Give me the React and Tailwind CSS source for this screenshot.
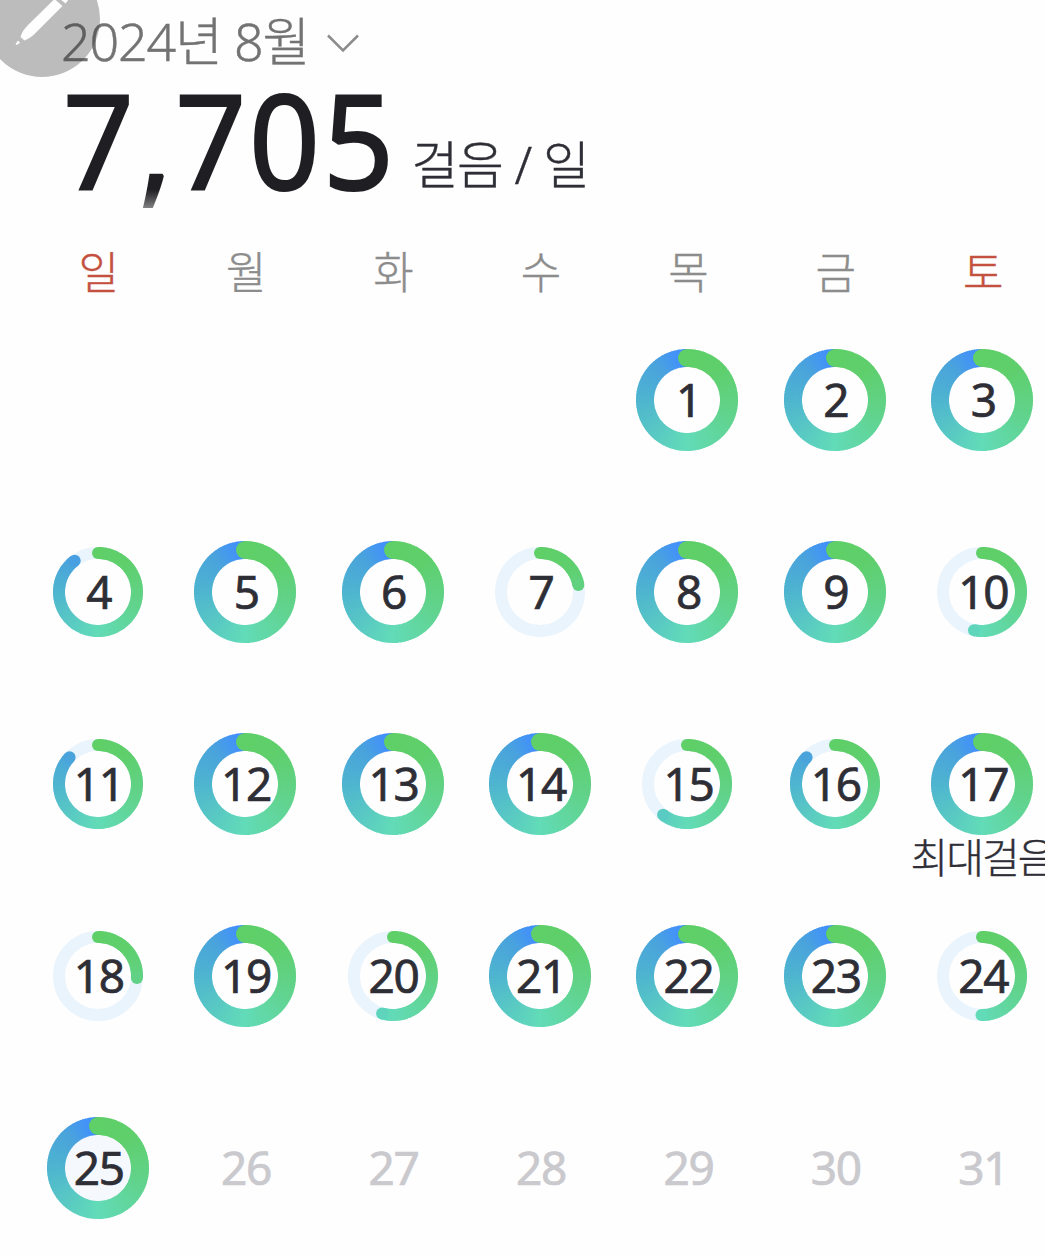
const WEEKDAYS = ["일", "월", "화", "수", "목", "금", "토"];

const LEADING_BLANKS = 4;
const TODAY = 25;
const BEST_DAY = 17;

// days that missed the goal, as a share of it
const PARTIAL = {
  4: 0.898,
  7: 0.221,
  10: 0.533,
  11: 0.87,
  15: 0.605,
  16: 0.87,
  18: 0.258,
  20: 0.545,
  24: 0.502,
};

const STOPS = [
  [0, [95, 207, 104]],
  [0.12, [95, 207, 108]],
  [0.3, [97, 211, 140]],
  [0.5, [98, 219, 184]],
  [0.75, [78, 180, 208]],
  [0.88, [74, 163, 220]],
  [0.97, [66, 144, 252]],
  [1, [66, 144, 252]],
];

function colourAt(t) {
  const i = Math.max(1, STOPS.findIndex(([pos]) => pos >= t));
  const [a, from] = STOPS[i - 1];
  const [b, to] = STOPS[i];
  const k = (t - a) / (b - a);
  return `rgb(${from.map((c, n) => Math.round(c + (to[n] - c) * k)).join(",")})`;
}

function pointAt(t, r) {
  const angle = t * Math.PI * 2;
  return [52 + r * Math.sin(angle), 52 - r * Math.cos(angle)];
}

function Ring({ value, isToday }) {
  const full = value >= 1;
  const r = full ? 42 : 39;
  const width = full ? 18 : 12;
  const count = Math.ceil(value * 120);
  const [endX, endY] = pointAt(value, r);

  return (
    <svg viewBox="0 0 104 104" className="size-[104px] col-start-1 row-start-1">
      {isToday && <circle cx="52" cy="52" r="36" fill="#f5f8fd" />}
      {!full && <circle cx="52" cy="52" r={r} fill="none" stroke="#e9f4fd" strokeWidth={width} />}
      {Array.from({ length: count }, (_, i) => {
        const start = (i / count) * value;
        // small overlap hides the seams between segments
        const end = Math.min(value, ((i + 1) / count) * value + 0.003);
        const [x1, y1] = pointAt(start, r);
        const [x2, y2] = pointAt(end, r);
        return (
          <path
            key={i}
            d={`M${x1} ${y1}A${r} ${r} 0 0 1 ${x2} ${y2}`}
            fill="none"
            stroke={colourAt(start)}
            strokeWidth={width}
          />
        );
      })}
      {!full && <circle cx={endX} cy={endY} r={width / 2} fill={colourAt(value)} />}
      <circle cx="52" cy={52 - r} r={width / 2} fill={colourAt(0)} />
    </svg>
  );
}

function Day({ day }) {
  const future = day > TODAY;
  return (
    <div className="relative grid h-48 place-items-center">
      {!future && <Ring value={PARTIAL[day] ?? 1} isToday={day === TODAY} />}
      <span
        className={`relative col-start-1 row-start-1 pb-[2px] pl-[2px] text-[46px] leading-none tracking-[-1.3px] [-webkit-text-stroke:0.7px_currentColor] ${
          future ? "text-[#c9c9ce]" : "text-[#2e2e36]"
        }`}
      >
        {day}
      </span>
      {day === BEST_DAY && (
        <span className="absolute top-[145px] left-[2px] text-[41px] leading-[48px] font-light tracking-[-2px] whitespace-nowrap text-[#2e2e36] [-webkit-text-stroke:0.4px_currentColor]">
          최대걸음
        </span>
      )}
    </div>
  );
}

function App() {
  const days = Array.from({ length: 31 }, (_, i) => i + 1);

  return (
    <div className="relative h-[1257px] w-[1045px] overflow-hidden bg-[#fefefe] font-['Noto_Sans','Noto_Sans_CJK_KR',sans-serif]">
      {/* floating pen button, translucent over the month */}
      <svg viewBox="0 0 110 80" className="absolute top-0 left-0 z-10 h-20 w-[110px]">
        <circle cx="42" cy="19" r="58" fill="#373737" fillOpacity="0.33" />
        <path d="M20.500 37Q22 31 28 25L54.500 -1L62.500 6L37 31.500Q31 38 24.500 40.500Z" fill="#fefefe" />
        <path d="M60 -1L65.500 3.500L69 -1Z" fill="#fefefe" />
        <path d="M18 41L19.500 43L16 44.500Z" fill="#fefefe" stroke="#fefefe" strokeLinejoin="round" />
      </svg>

      {/* month picker */}
      <div className="flex h-[81px] items-center pl-[61px] text-[#737373]">
        <span className="text-[52px] leading-[81px] font-light tracking-[-1.2px] whitespace-nowrap [-webkit-text-stroke:0.4px_currentColor]">
          2024년 8월
        </span>
        <svg viewBox="0 0 32 20" className="mt-1.5 ml-[18px] h-5 w-8" fill="none" stroke="#8c8c8c" strokeWidth="2.500">
          <path d="M1 1.500L16 16.500L31 1.500" />
        </svg>
      </div>

      {/* daily average */}
      <div className="flex h-[155px] items-baseline pl-[63px]">
        <span className="origin-left scale-x-[0.94] text-[132px] leading-[117px] tracking-[3.2px] text-[#1f1e23] [-webkit-text-stroke:2px_currentColor]">
          7
          <span className="ml-0.5 bg-linear-to-b from-[#1f1e23] from-78% to-[#aaa] to-92% bg-clip-text text-transparent [-webkit-text-stroke:2px_transparent]">
            ,
          </span>
          705
        </span>
        <span className="relative -top-[6px] -ml-[7px] text-[51px] leading-none font-light tracking-[-1.3px] whitespace-nowrap text-[#2e2e36] [-webkit-text-stroke:0.4px_currentColor]">
          걸음 / 일
        </span>
      </div>

      <div className="ml-6 grid w-[1032px] grid-cols-7">
        {WEEKDAYS.map((name, i) => (
          <div
            key={name}
            className={`flex h-[68px] items-center justify-center pt-1 pl-0.5 text-[44px] leading-none font-light [-webkit-text-stroke:0.4px_currentColor] ${
              i === 0 || i === 6 ? "text-[#c4513f]" : "text-[#8c8c8c]"
            }`}
          >
            {name}
          </div>
        ))}
        {Array.from({ length: LEADING_BLANKS }, (_, i) => (
          <div key={`blank-${i}`} />
        ))}
        {days.map((day) => (
          <Day key={day} day={day} />
        ))}
      </div>
    </div>
  );
}

export default App;
